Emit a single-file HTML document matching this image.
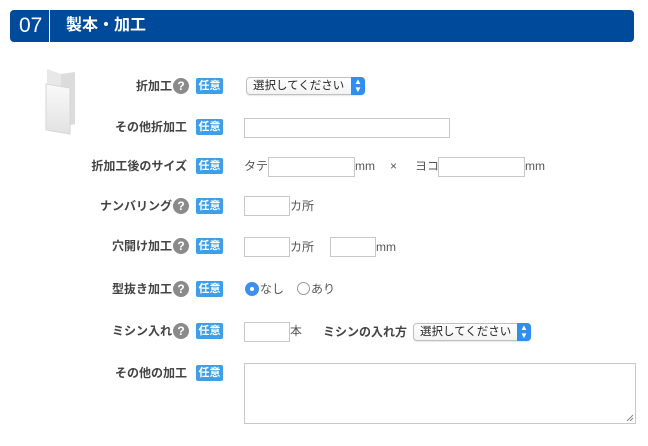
<!DOCTYPE html>
<html><head><meta charset="utf-8"><style>
body{margin:0;width:648px;height:446px;background:#fff;font-family:"Liberation Sans","Noto Sans CJK JP",sans-serif;color:#444;position:relative;overflow:hidden}
.a{position:absolute}
.hdr{left:10px;top:10px;width:624px;height:32px;background:#004a9b;border-radius:4px;color:#fff}
.lbl{font-size:12px;font-weight:bold;text-align:right;width:180px;left:9px;line-height:16px;color:#444}
.q{display:inline-block;width:16px;height:16px;border-radius:50%;background:#8a8a8a;color:#fff;font-size:12px;text-align:center;line-height:16px;vertical-align:top;margin-left:1px}
.b{left:196px;width:27px;height:16px;background:#3d9fe8;color:#fff;font-size:11px;line-height:16px;text-align:center;border-radius:2px;font-weight:bold}
.in{border:1px solid #c8c8c8;box-sizing:border-box;height:20px;background:#fff}
.t{font-size:12px;line-height:16px;color:#555}
.sel{border:1px solid #c0c0c0;border-radius:4px;height:18px;box-sizing:border-box;font-size:11.5px;line-height:16px;padding-left:6px;background:linear-gradient(#fff,#f3f3f3);box-shadow:0 1px 1px rgba(0,0,0,.1);color:#222}
.sel i{position:absolute;right:-1px;top:-1px;width:14px;height:18px;background:#2f8ff0;border-radius:0 4px 4px 0;color:#fff;font-style:normal;font-size:8px;line-height:8px;text-align:center;padding-top:1px;box-sizing:border-box}
</style></head><body>
<div class="a hdr">
 <div class="a" style="left:9px;top:3px;font-size:21px;line-height:26px">07</div>
 <div class="a" style="left:39px;top:0;width:1px;height:32px;background:#fff"></div>
 <div class="a" style="left:56px;top:5px;font-size:16px;font-weight:bold;line-height:22px">製本・加工</div>
</div>
<svg class="a" style="left:44px;top:66px" width="34" height="70">
<defs><linearGradient id="g" x1="0" y1="0" x2="0" y2="1"><stop offset="0" stop-color="#fafafa"/><stop offset="1" stop-color="#e2e2e2"/></linearGradient></defs>
<polygon points="3,3 17,8 17,60 3,56" fill="#e8e8e8"/>
<polygon points="17,8 31,6 31,58 17,62" fill="#dcdcdc"/>
<polygon points="2,18 26,22 26,68 2,64" fill="url(#g)" stroke="#d6d6d6"/></svg>

<div class="a lbl" style="top:78px">折加工<span class="q">?</span></div><div class="a b" style="top:78px">任意</div>
<div class="a sel" style="left:246px;top:77px;width:119px">選択してください<i>▲<br>▼</i></div>

<div class="a lbl" style="top:119px;width:178px">その他折加工</div><div class="a b" style="top:119px">任意</div>
<div class="a in" style="left:244px;top:118px;width:206px"></div>

<div class="a lbl" style="top:158px;width:178px">折加工後のサイズ</div><div class="a b" style="top:158px">任意</div>
<div class="a t" style="left:244px;top:158px">タテ</div><div class="a in" style="left:268px;top:157px;width:87px"></div><div class="a t" style="left:355px;top:158px">mm</div><div class="a t" style="left:390px;top:158px">×</div><div class="a t" style="left:415px;top:158px">ヨコ</div><div class="a in" style="left:438px;top:157px;width:87px"></div><div class="a t" style="left:525px;top:158px">mm</div>

<div class="a lbl" style="top:198px">ナンバリング<span class="q">?</span></div><div class="a b" style="top:198px">任意</div>
<div class="a in" style="left:244px;top:196px;width:46px"></div><div class="a t" style="left:290px;top:198px">カ所</div>

<div class="a lbl" style="top:238px">穴開け加工<span class="q">?</span></div><div class="a b" style="top:238px">任意</div>
<div class="a in" style="left:244px;top:237px;width:46px"></div><div class="a t" style="left:290px;top:239px">カ所</div><div class="a in" style="left:330px;top:237px;width:46px"></div><div class="a t" style="left:376px;top:239px">mm</div>

<div class="a lbl" style="top:281px">型抜き加工<span class="q">?</span></div><div class="a b" style="top:281px">任意</div>
<div class="a" style="left:245px;top:282px;width:14px;height:14px;border-radius:50%;background:#3d8ff0"><div class="a" style="left:5px;top:5px;width:4px;height:4px;border-radius:50%;background:#fff"></div></div>
<div class="a t" style="left:260px;top:281px">なし</div>
<div class="a" style="left:297px;top:282px;width:13px;height:13px;border-radius:50%;border:1px solid #999;box-sizing:border-box"></div>
<div class="a t" style="left:311px;top:281px">あり</div>

<div class="a lbl" style="top:323px">ミシン入れ<span class="q">?</span></div><div class="a b" style="top:323px">任意</div>
<div class="a in" style="left:244px;top:322px;width:46px"></div><div class="a t" style="left:290px;top:323px">本</div>
<div class="a t" style="left:323px;top:324px;font-weight:bold;color:#444">ミシンの入れ方</div>
<div class="a sel" style="left:413px;top:323px;width:118px">選択してください<i>▲<br>▼</i></div>

<div class="a lbl" style="top:365px;width:178px">その他の加工</div><div class="a b" style="top:365px">任意</div>
<div class="a in" style="left:244px;top:363px;width:392px;height:61px"></div>
<svg class="a" style="left:626px;top:414px" width="8" height="8"><path d="M1 7L7 1M4 7L7 4" stroke="#888" stroke-width="1"/></svg>
</body></html>
